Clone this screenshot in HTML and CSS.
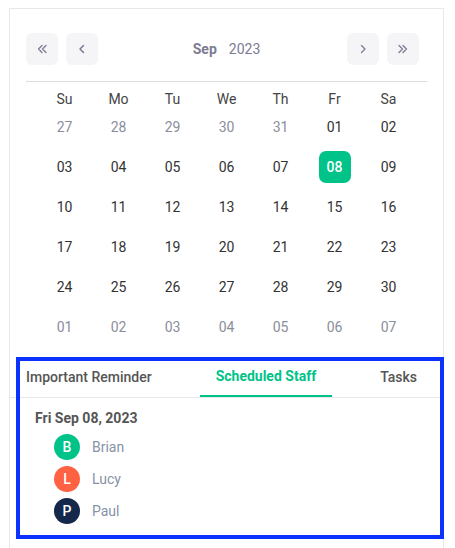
FILE: index.html
```html
<!DOCTYPE html>
<html>
<head>
<meta charset="utf-8">
<link rel="stylesheet" href="styles.css">
</head>
<body>
<div class="card">
  <div class="calendar">
    <div class="cal-header">
      <div class="nav-group left">
        <button class="nav-btn" aria-label="Previous year">
          <svg width="14" height="14" viewBox="0 0 14 14"><path d="M7 3.5 3.5 7 7 10.5M11 3.5 7.5 7 11 10.5" fill="none" stroke="#7b7c93" stroke-width="1.3" stroke-linecap="round" stroke-linejoin="round"/></svg>
        </button>
        <button class="nav-btn" aria-label="Previous month">
          <svg width="14" height="14" viewBox="0 0 14 14"><path d="M8.5 3.5 5 7l3.5 3.5" fill="none" stroke="#7b7c93" stroke-width="1.5" stroke-linecap="round" stroke-linejoin="round"/></svg>
        </button>
      </div>
      <div class="month-label"><span class="month">Sep</span><span class="year">2023</span></div>
      <div class="nav-group right">
        <button class="nav-btn" aria-label="Next month">
          <svg width="14" height="14" viewBox="0 0 14 14"><path d="M5.5 3.5 9 7l-3.5 3.5" fill="none" stroke="#7b7c93" stroke-width="1.3" stroke-linecap="round" stroke-linejoin="round"/></svg>
        </button>
        <button class="nav-btn" aria-label="Next year">
          <svg width="14" height="14" viewBox="0 0 14 14"><path d="M3 3.5 6.5 7 3 10.5M7 3.5 10.5 7 7 10.5" fill="none" stroke="#7b7c93" stroke-width="1.3" stroke-linecap="round" stroke-linejoin="round"/></svg>
        </button>
      </div>
    </div>
    <div class="weekdays">
      <span>Su</span><span>Mo</span><span>Tu</span><span>We</span><span>Th</span><span>Fr</span><span>Sa</span>
    </div>
    <div class="days">
      <span class="day muted">27</span><span class="day muted">28</span><span class="day muted">29</span><span class="day muted">30</span><span class="day muted">31</span><span class="day">01</span><span class="day">02</span>
      <span class="day">03</span><span class="day">04</span><span class="day">05</span><span class="day">06</span><span class="day">07</span><span class="day selected">08</span><span class="day">09</span>
      <span class="day">10</span><span class="day">11</span><span class="day">12</span><span class="day">13</span><span class="day">14</span><span class="day">15</span><span class="day">16</span>
      <span class="day">17</span><span class="day">18</span><span class="day">19</span><span class="day">20</span><span class="day">21</span><span class="day">22</span><span class="day">23</span>
      <span class="day">24</span><span class="day">25</span><span class="day">26</span><span class="day">27</span><span class="day">28</span><span class="day">29</span><span class="day">30</span>
      <span class="day muted">01</span><span class="day muted">02</span><span class="day muted">03</span><span class="day muted">04</span><span class="day muted">05</span><span class="day muted">06</span><span class="day muted">07</span>
    </div>
  </div>
  <div class="panel">
    <div class="tabs">
      <div class="tab">Important Reminder</div>
      <div class="tab active">Scheduled Staff</div>
      <div class="tab">Tasks</div>
    </div>
    <div class="tab-content">
      <div class="date-title">Fri Sep 08, 2023</div>
      <ul class="staff">
        <li><span class="avatar green">B</span><span class="name">Brian</span></li>
        <li><span class="avatar orange">L</span><span class="name">Lucy</span></li>
        <li><span class="avatar navy">P</span><span class="name">Paul</span></li>
      </ul>
    </div>
    <div class="highlight"></div>
  </div>
</div>
</body>
</html>
```

FILE: styles.css
```css
* { box-sizing: border-box; }
html, body { margin: 0; padding: 0; background: #ffffff; }
body {
  font-family: Roboto, "Liberation Sans", Arial, sans-serif;
  font-size: 14px;
  color: #333;
  height: 548px;
  overflow: hidden;
}
.card {
  margin: 8px 0 0 9px;
  width: 435px;
  min-height: 600px;
  border: 1px solid #e8e8e8;
  background: #fff;
}
.calendar {
  padding: 24px 16px 14px 16px;
}
.cal-header {
  display: grid;
  grid-template-columns: 1fr auto 1fr;
  align-items: center;
  padding-bottom: 16px;
  border-bottom: 1px solid #dcdcdc;
}
.nav-group { display: flex; gap: 8px; }
.nav-group.left { justify-self: start; }
.nav-group.right { justify-self: end; margin-right: 8px; }
.nav-btn {
  width: 32px;
  height: 32px;
  border: none;
  border-radius: 6px;
  background: #f5f5f7;
  padding: 0;
  display: flex;
  align-items: center;
  justify-content: center;
}
.month-label {
  display: flex;
  gap: 12px;
  color: #7b7c93;
  font-size: 14px;
}
.month { font-weight: 700; }
.weekdays {
  display: grid;
  grid-template-columns: repeat(7, 54px);
  justify-content: center;
  margin-top: 5px;
  height: 24px;
  line-height: 24px;
  text-align: center;
  color: #444;
}
.days {
  display: grid;
  grid-template-columns: repeat(7, 54px);
  grid-auto-rows: 32px;
  row-gap: 8px;
  justify-content: center;
  justify-items: center;
  align-items: center;
}
.day {
  width: 32px;
  height: 32px;
  line-height: 32px;
  text-align: center;
  color: #333;
  border-radius: 7px;
}
.day.muted { color: #8a8e9c; }
.day.selected {
  background: #00c389;
  color: #fff;
  font-weight: 500;
}
.panel { position: relative; }
.tabs {
  display: flex;
  gap: 32px;
  height: 41px;
  border-bottom: 1px solid #e8e8e8;
}
.tab {
  padding: 0 16px;
  line-height: 40px;
  font-weight: 500;
  color: #555;
}
.tab.active {
  color: #00c389;
  font-weight: 700;
  border-bottom: 2px solid #00c389;
  line-height: 38px;
}
.tab-content {
  padding: 10px 25px 12px;
}
.date-title {
  font-weight: 700;
  color: #555;
  line-height: 20px;
  margin-bottom: 3px;
}
.staff {
  list-style: none;
  margin: 0;
  padding: 0 0 0 19px;
}
.staff li {
  display: flex;
  align-items: center;
  gap: 12px;
  height: 32px;
}
.avatar {
  width: 26px;
  height: 26px;
  border-radius: 50%;
  color: #fff;
  display: flex;
  align-items: center;
  justify-content: center;
  font-size: 14px;
  font-weight: 500;
}
.avatar.green { background: #00c389; }
.avatar.orange { background: #ff6143; }
.avatar.navy { background: #15284b; }
.name { color: #8592a6; }
.highlight {
  position: absolute;
  left: 6px;
  top: 0;
  width: 428px;
  height: 182px;
  border: 4px solid #0a33ff;
  pointer-events: none;
}
```
